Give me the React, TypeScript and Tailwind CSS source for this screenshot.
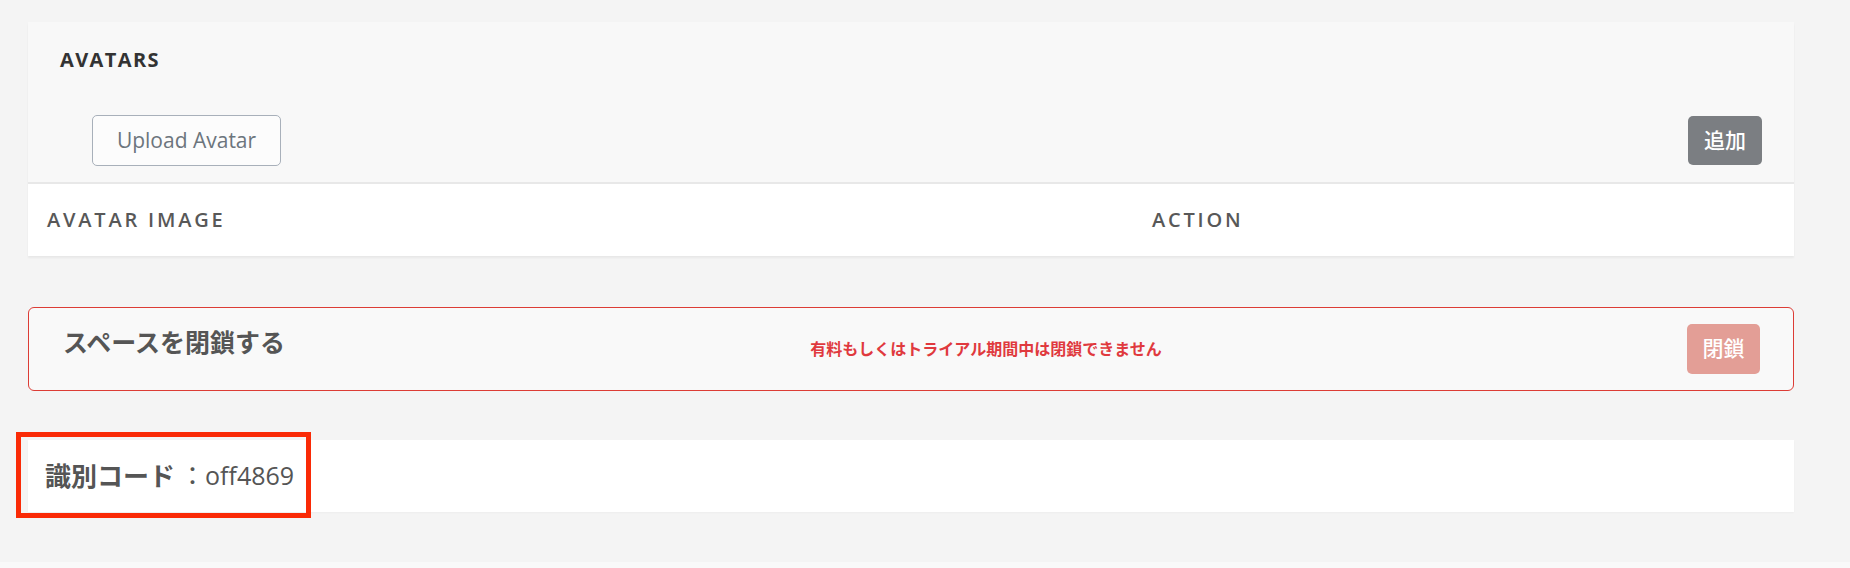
const font = { fontFamily: '"Open Sans", "Noto Sans CJK JP", sans-serif' };

function AvatarsPanel() {
  return (
    <section className="bg-[#f8f8f8] shadow-[0_2px_2px_rgba(0,0,0,0.05)]">
      <div className="px-[32px] pt-[24px] pb-[16px]">
        <h2 className="text-[20px] leading-[28px] font-bold tracking-[0.07em] text-[#333]">AVATARS</h2>
        <div className="mt-[41px] flex items-center justify-between">
          <button className="ml-[32px] h-[51px] w-[189px] rounded-[5px] border border-[#a8b0ba] bg-[#fcfcfc] text-[21px] text-[#6c757d]">
            Upload Avatar
          </button>
          <button className="h-[49px] w-[74px] rounded-[5px] bg-[#7b7e82] text-[21px] font-medium text-white">
            追加
          </button>
        </div>
      </div>
      <div className="grid h-[74px] grid-cols-[1105px_1fr] items-center border-t-2 border-[#e8e8e8] bg-white text-[20px] font-semibold tracking-[0.14em] text-[#585858]">
        <div className="pl-[19px]">AVATAR IMAGE</div>
        <div className="pl-[19px]">ACTION</div>
      </div>
    </section>
  );
}

function ClosePanel() {
  return (
    <section className="flex h-[84px] items-center justify-between rounded-[6px] border border-[#dc3c35] bg-[#f9f9f9] pl-[34px] pr-[33px]">
      <h3 className="pb-[12px] text-[25px] font-bold text-[#555]">スペースを閉鎖する</h3>
      <p className="text-[16px] font-semibold text-[#e0393e]">有料もしくはトライアル期間中は閉鎖できません</p>
      <button className="h-[50px] w-[73px] rounded-[5px] bg-[#e39e96] text-[21px] font-medium text-white">閉鎖</button>
    </section>
  );
}

function IdPanel() {
  return (
    <section className="relative flex h-[72px] items-center bg-white pl-[17px] shadow-[0_1px_2px_rgba(0,0,0,0.03)]">
      <p className="flex items-center text-[25px] text-[#555]">
        <span className="text-[26px] font-bold">識別コード</span>
        <span className="ml-[5px]">：</span>
        <span>off4869</span>
      </p>
      <div className="pointer-events-none absolute left-[-12px] top-[-8px] h-[86px] w-[295px] border-[5px] border-[#fa2a06]" />
    </section>
  );
}

export default function App() {
  return (
    <div className="h-[568px] bg-[#f9f9f9]" style={font}>
      <main className="h-[562px] bg-[#f4f4f4] pl-[28px] pr-[56px] pt-[22px]">
        <AvatarsPanel />
        <div className="mt-[51px]">
          <ClosePanel />
        </div>
        <div className="mt-[49px]">
          <IdPanel />
        </div>
      </main>
    </div>
  );
}
